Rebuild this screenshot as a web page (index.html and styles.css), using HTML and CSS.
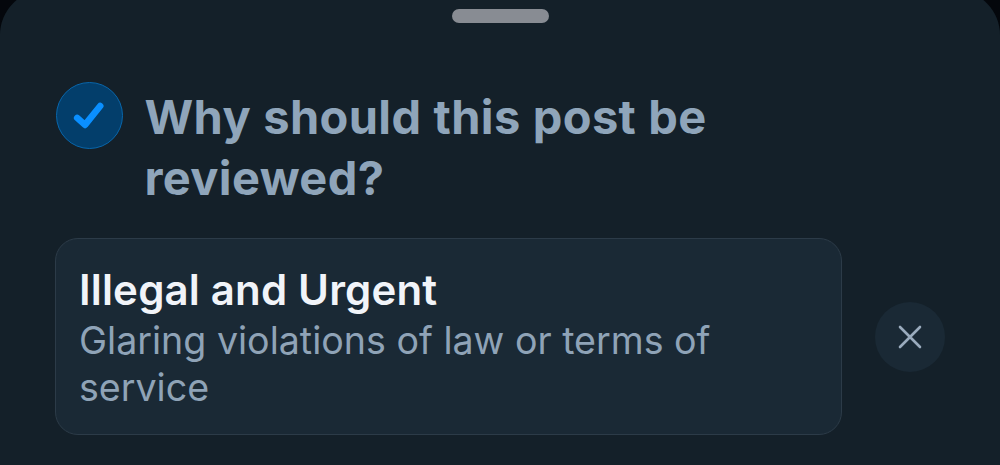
FILE: index.html
```html
<!DOCTYPE html>
<html lang="en">
<head>
  <meta charset="UTF-8">
  <title>Report post</title>
  <link rel="stylesheet" href="styles.css">
</head>

<body>
  <div class="sheet">
    <div class="handle"></div>

    <header class="step">
      <div class="step-badge">
        <svg width="32" height="32" viewBox="0 0 32 32">
          <path d="M4.2 17.9 L12 24.9 L27.2 6" fill="none" stroke="#0a8fff" stroke-width="6.6" stroke-linecap="round" stroke-linejoin="round"/>
        </svg>
      </div>
      <h1>Why should this post be reviewed?</h1>
    </header>

    <div class="choice">
      <div class="option">
        <h2>Illegal and Urgent</h2>
        <p>Glaring violations of law or terms of service</p>
      </div>
      <button class="clear" aria-label="Clear">
        <svg width="24" height="24" viewBox="0 0 24 24">
          <path d="M2 2 L22 22 M22 2 L2 22" fill="none" stroke="#9aabbd" stroke-width="2.6" stroke-linecap="round"/>
        </svg>
      </button>
    </div>
  </div>
</body>
</html>
```

FILE: styles.css
```css
body {
  margin: 0;
  background-color: #04070c;
  font-family: Inter, sans-serif;
  overflow: hidden;
}

/* top edge of the sheet sits just above the viewport */
.sheet {
  box-sizing: border-box;
  height: 475px;
  margin-top: -10px;
  padding: 19px 55px 0;
  border-radius: 45px 45px 0 0;
  background-color: #142029;
}

.handle {
  width: 97px;
  height: 14px;
  margin: 0 auto;
  border-radius: 7px;
  background-color: #888c93;
}

.step {
  display: flex;
  gap: 22px;
  margin-top: 59px;
}

.step-badge {
  display: flex;
  align-items: center;
  justify-content: center;
  box-sizing: border-box;
  flex: none;
  width: 67px;
  height: 67px;
  margin-left: 0.5px;
  border: 1px solid #0866ab;
  border-radius: 50%;
  background-color: #033e6b;
}

h1 {
  width: 620px;
  margin: 4px 0 0;
  font-size: 47px;
  font-weight: 700;
  line-height: 61px;
  letter-spacing: 0.35px;
  word-spacing: 0.7px;
  color: #8fa5ba;
}

.choice {
  display: flex;
  align-items: center;
  gap: 33px;
  margin-top: 30px;
}

.option {
  box-sizing: border-box;
  width: 787px;
  height: 197px;
  padding: 25px 23px;
  border: 1px solid #2c3b48;
  border-radius: 23px;
  background-color: #1a2935;
}

h2 {
  margin: 0;
  font-size: 42px;
  font-weight: 600;
  line-height: 51px;
  letter-spacing: 0.17px;
  color: #f1f4f9;
}

.option p {
  margin: 2px 0 0;
  font-size: 37.6px;
  line-height: 47px;
  color: #8fa3b7;
}

.clear {
  display: flex;
  align-items: center;
  justify-content: center;
  width: 70px;
  height: 70px;
  padding: 0;
  border: none;
  border-radius: 50%;
  background-color: #1a2935;
}
```
